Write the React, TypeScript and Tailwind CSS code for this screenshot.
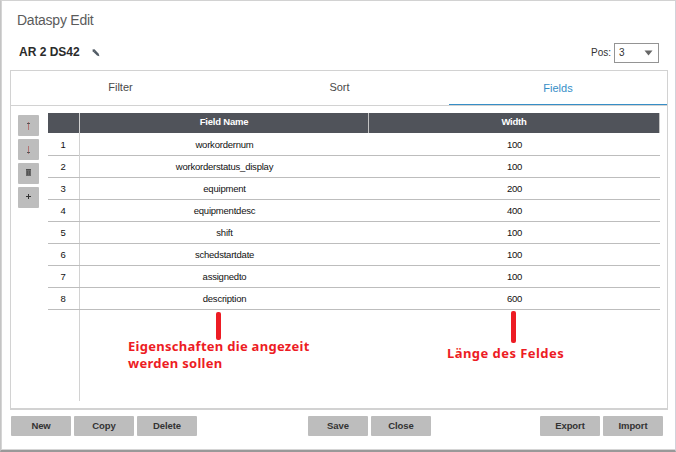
import type { ReactNode } from "react";

const fields = [
  { name: "workordernum", width: 100 },
  { name: "workorderstatus_display", width: 100 },
  { name: "equipment", width: 200 },
  { name: "equipmentdesc", width: 400 },
  { name: "shift", width: 100 },
  { name: "schedstartdate", width: 100 },
  { name: "assignedto", width: 100 },
  { name: "description", width: 600 },
];

function ActionButton({ children }: { children: ReactNode }) {
  return (
    <button className="h-5 w-[60px] rounded-[1px] bg-[#bdbdbd] text-[9.5px] leading-5 font-bold tracking-[-0.1px] text-[#333]">
      {children}
    </button>
  );
}

function ToolButton({ label, children }: { label: string; children: ReactNode }) {
  return (
    <button aria-label={label} className="flex size-[21px] items-center justify-center rounded-[1px] bg-[#bdbdbd]">
      <svg width="21" height="21" viewBox="0 0 21 21" shapeRendering="crispEdges">
        {children}
      </svg>
    </button>
  );
}

function Tab({ label, className }: { label: string; className: string }) {
  return <div className={`h-[34px] text-center text-[11px] ${className}`}>{label}</div>;
}

export default function App() {
  return (
    <div className="relative flex h-[452px] w-[676px] flex-col overflow-hidden border-t border-r border-b-2 border-l border-t-[#d2d2d2] border-r-[#d2d2da] border-b-[#999] border-l-[#c4c4c4] bg-white font-['Liberation_Sans',Arial,sans-serif] text-[#111]">
      <div className="flex h-[449px] flex-col border-b border-l border-[#d5d5d5]">
        <h1 className="h-[34px] pt-[9px] pl-[15px] text-[14px] leading-5 tracking-[-0.24px] text-[#5b5b5b]">Dataspy Edit</h1>
        <div className="flex h-[35px] items-start justify-between pr-4 pl-[17px]">
          <div className="flex items-center pt-[7px]">
            <span className="text-[12px] leading-5 font-bold text-[#2b2b2b]">AR 2 DS42</span>
            <svg className="mt-0.5 ml-3" width="8" height="8" viewBox="0 0 8 8">
              <path d="M0.5 0.5 L2.5 0.3 L6.7 4.7 L7.4 7.3 L5 6.5 L0.7 2.3Z" fill="#505a64" />
              <path d="M1.9 2.9L3 1.7" stroke="#aaa" strokeWidth="0.5" />
            </svg>
          </div>
          <div className="flex items-center pt-2">
            <span className="mr-[3px] text-[10px] leading-5 text-[#333]">Pos:</span>
            <div className="flex h-5 w-[45px] items-center justify-between border border-[#949494] pr-[5px] pl-1">
              <span className="text-[10px] leading-5 text-[#333]">3</span>
              <svg width="9" height="6" viewBox="0 0 9 6">
                <path d="M0.5 0.5H8.5L4.5 5.5Z" fill="#666" />
              </svg>
            </div>
          </div>
        </div>

        <div className="ml-2 flex h-[340px] w-[658px] shrink-0 flex-col border border-b-2 border-[#d2d2d2]">
          <div className="grid h-[35px] shrink-0 grid-cols-[219px_219px_218px] border-b border-[#d2d2d2] text-[#4a4a4a]">
            <Tab label="Filter" className="leading-[32px]" />
            <Tab label="Sort" className="leading-[32px]" />
            <Tab label="Fields" className="border-b border-b-[#368ec7] leading-[34px] text-[#368ec7]" />
          </div>
          <div className="flex items-start pt-[7px] pl-[7px]">
            <div className="mt-0.5 mr-[9px] flex flex-col gap-[3px]">
              <ToolButton label="Move up">
                <path d="M10 7h1v8h-1z" fill="#b27474" />
                <path d="M9 8h3v1h-3z" fill="#555" />
              </ToolButton>
              <ToolButton label="Move down">
                <path d="M10 7h1v8h-1z" fill="#b27474" />
                <path d="M9 13h3v1h-3z" fill="#555" />
              </ToolButton>
              <ToolButton label="Delete field">
                <path d="M8 6h5v1h-5z" fill="#4e4e4e" />
                <path d="M8 7h5v6h-5z" fill="#686868" />
                <path d="M9 8h1v4h-1zM11 8h1v4h-1z" fill="#555" />
              </ToolButton>
              <ToolButton label="Add field">
                <path d="M8 9h5v1h-5zM10 7h1v5h-1z" fill="#333" />
              </ToolButton>
            </div>

            <div className="flex h-[288px] w-[612px] flex-col text-center text-[9.5px] tracking-[-0.22px]">
              <div className="grid h-5 shrink-0 grid-cols-[32px_289px_291px] bg-[#50535a] leading-[18px] font-bold text-white">
                <div className="border-r border-[#d2d2d2]" />
                <div className="border-r border-[#c4c4c4]">Field Name</div>
                <div className="border-r border-[#c4c4c4]">Width</div>
              </div>
              {fields.map((field, index) => (
                <div
                  key={field.name}
                  className="grid h-[22px] shrink-0 grid-cols-[32px_289px_291px] border-b border-[#bdbdbd] leading-[21px] nth-2:h-[23px] nth-2:leading-[23px]"
                >
                  <div className="border-r border-[#d2d2d2] pr-px">{index + 1}</div>
                  <div>{field.name}</div>
                  <div>{field.width}</div>
                </div>
              ))}
              <div className="w-8 grow border-r border-[#d2d2d2]" />
            </div>
          </div>
        </div>

        <div className="flex pt-[6px] pl-[9px]">
          <div className="flex gap-[3px]">
            <ActionButton>New</ActionButton>
            <ActionButton>Copy</ActionButton>
            <ActionButton>Delete</ActionButton>
          </div>
          <div className="ml-[111px] flex gap-[3px]">
            <ActionButton>Save</ActionButton>
            <ActionButton>Close</ActionButton>
          </div>
          <div className="ml-[109px] flex gap-[3px]">
            <ActionButton>Export</ActionButton>
            <ActionButton>Import</ActionButton>
          </div>
        </div>
      </div>

      <div className="absolute top-[311px] left-[215px] h-7 w-[5px] rounded-[2px] bg-[#ed1c24]" />
      <p className="absolute top-[337px] left-[127px] font-['Noto_Sans',sans-serif] text-[13px] leading-[17px] font-bold tracking-[0.28px] whitespace-nowrap text-[#ed1c24]">
        Eigenschaften die angezeit
        <br />
        werden sollen
      </p>
      <div className="absolute top-[310px] left-[510px] h-8 w-[5px] rounded-[2px] bg-[#ed1c24]" />
      <p className="absolute top-[344px] left-[446px] font-['Noto_Sans',sans-serif] text-[13px] leading-[17px] font-bold tracking-[0.45px] whitespace-nowrap text-[#ed1c24]">
        Länge des Feldes
      </p>
    </div>
  );
}
